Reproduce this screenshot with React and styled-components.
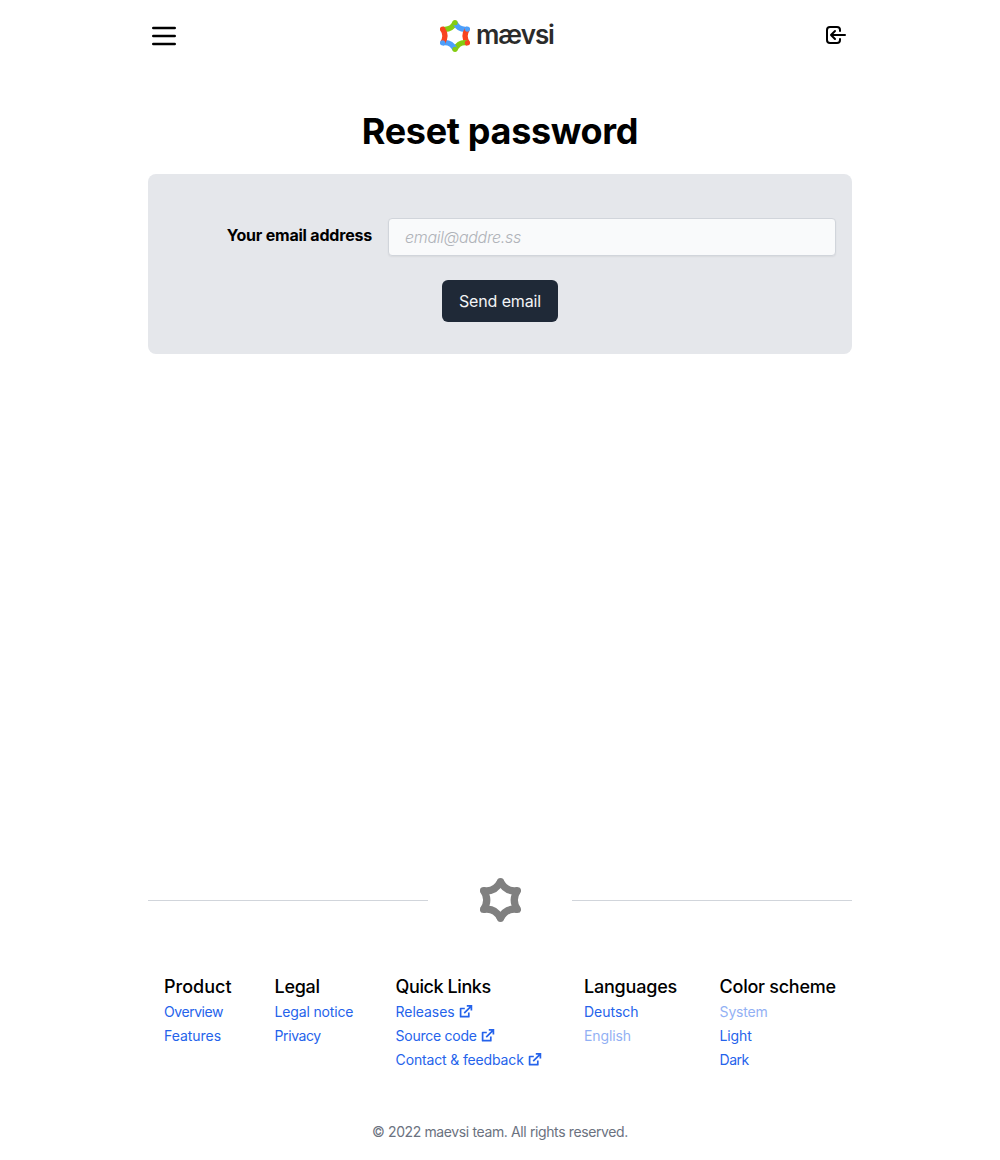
import React from 'react';
import styled, { createGlobalStyle } from 'styled-components';

const GlobalStyle = createGlobalStyle`
  *, *::before, *::after { box-sizing: border-box; }
  body {
    margin: 0;
    background: #fff;
    color: #000;
    font-family: Inter, "Open Sans", sans-serif;
    font-size: 16px;
    line-height: 24px;
  }
`;

const Page = styled.div`
  display: flex;
  flex-direction: column;
  width: 704px;
  height: 1160px;
  margin: 0 auto;
`;

const Header = styled.header`
  display: flex;
  align-items: flex-start;
  justify-content: space-between;
  height: 72px;
  padding-top: 20px;
`;

const IconButton = styled.button`
  display: flex;
  padding: ${p => p.$padding || '0'};
  border: 0;
  background: none;
  color: inherit;
`;

const Brand = styled.a`
  display: flex;
  color: #2b2b2b;
  margin-right: 10px;
`;

const Wordmark = styled.span`
  margin-left: 6px;
  padding-top: 1px;
  width: 78px;
  font-size: 26px;
  font-weight: 600;
  line-height: 28px;
  letter-spacing: -1.15px;
  white-space: nowrap;
`;

const Tracked = styled.span`
  letter-spacing: ${p => p.$tracking || 0}px;
  white-space: nowrap;
`;

const Title = styled.h1`
  margin: 39px 0 0;
  font-size: 36px;
  font-weight: 700;
  line-height: 40px;
  text-align: center;
`;

const Card = styled.form`
  display: flex;
  flex-direction: column;
  align-items: center;
  gap: 24px;
  height: 180px;
  margin-top: 23px;
  padding: 44px 16px 0;
  border-radius: 8px;
  background: #e5e7eb;
`;

const Field = styled.div`
  display: grid;
  grid-template-columns: 208px 448px;
  column-gap: 16px;
  width: 100%;
`;

const Label = styled.label`
  padding-top: 5px;
  font-weight: 700;
  text-align: right;
`;

const Input = styled.input`
  height: 38px;
  padding: 0 16px;
  border: 1px solid #d1d5db;
  border-radius: 4px;
  background: #f9fafb;
  box-shadow: 0 1px 2px rgba(0, 0, 0, 0.06);
  font: 400 16px/24px Inter, "Open Sans", sans-serif;
  &::placeholder {
    color: #b0b3b9;
    font-style: italic;
    font-weight: 300;
    letter-spacing: -0.3px;
    opacity: 1;
  }
`;

const Submit = styled.button`
  width: 116px;
  height: 42px;
  padding: 0;
  border: 0;
  border-radius: 6px;
  background: #1f2937;
  color: #f3f4f6;
  font: 400 16px/24px Inter, "Open Sans", sans-serif;
`;

const Footer = styled.footer`
  margin-top: auto;
  height: 284px;
`;

const Divider = styled.div`
  display: flex;
  align-items: center;
  justify-content: space-between;
  height: 48px;
`;

const Rule = styled.div`
  width: 280px;
  height: 1px;
  margin-top: 1px;
  background: #d1d5db;
`;

const Columns = styled.nav`
  display: grid;
  grid-template-columns: 110.6px 121px 188.4px 135.6px 116.4px;
  height: 100px;
  margin-top: 48px;
  padding: 0 16px;
`;

const Heading = styled.h2`
  height: 28px;
  margin: 0;
  font-size: 18px;
  font-weight: 500;
  line-height: 30px;
`;

const FooterLink = styled.a`
  display: flex;
  align-items: center;
  gap: 4px;
  height: 24px;
  color: #2563eb;
  opacity: ${p => (p.$muted ? 0.5 : 1)};
  font-size: 14px;
`;

const Copyright = styled.p`
  margin: 48px 0 0;
  color: #6b7280;
  font-size: 14px;
  text-align: center;
`;

const GREEN = '#84cc10';
const BLUE = '#4c9ffb';
const RED = '#f8441f';

// Each arm ends in a round cap that overlaps the start of the next one.
const arms = [
  { d: 'M5 12.5Q16.5 14.5 22 3.7', end: [22, 3.7], color: GREEN },
  { d: 'M22 3.7Q27.5 14.5 39 12.5', end: [39, 12.5], color: BLUE },
  { d: 'M39 12.5Q32.5 22 39 31.5', end: [39, 31.5], color: RED },
  { d: 'M39 31.5Q27.5 29.5 22 40.3', end: [22, 40.3], color: GREEN },
  { d: 'M22 40.3Q16.5 29.5 5 31.5', end: [5, 31.5], color: BLUE },
  { d: 'M5 31.5Q11.5 22 5 12.5', end: [5, 12.5], color: RED },
];

const Star = ({ width, height, mono }) => (
  <svg width={width} height={height} viewBox="1.5 0 41 44" preserveAspectRatio="none" fill="none">
    {arms.map(a => (
      <path key={a.d} d={a.d} stroke={mono || a.color} strokeWidth="7.2" />
    ))}
    {arms.map(a => (
      <circle key={a.d} cx={a.end[0]} cy={a.end[1]} r="3.6" fill={mono || a.color} />
    ))}
  </svg>
);

const MenuIcon = () => (
  <svg width="32" height="32" viewBox="0 0 24 24" fill="none" stroke="currentColor" strokeWidth="2" strokeLinecap="round">
    <path d="M4 6h16M4 12h16M4 18h16" />
  </svg>
);

const LoginIcon = () => (
  <svg width="24" height="24" viewBox="0 0 24 24" fill="none" stroke="currentColor" strokeWidth="2" strokeLinecap="round" strokeLinejoin="round">
    <path d="M11 16l-4-4m0 0l4-4m-4 4h14m-5 4v1a3 3 0 01-3 3H6a3 3 0 01-3-3V7a3 3 0 013-3h7a3 3 0 013 3v1" />
  </svg>
);

const ExternalIcon = () => (
  <svg width="14" height="14" viewBox="0.2 0.5 14 14" fill="none" stroke="currentColor" strokeWidth="1.7">
    <path d="M6 4H1.8v8.2H10V8" strokeLinejoin="round" />
    <path d="M8 1.4h4.6V6M12.2 1.8L5.4 8.6" />
  </svg>
);

const columns = [
  { title: 'Product', ls: 0, links: [['Overview', -0.44], ['Features', -0.03]] },
  { title: 'Legal', ls: -0.3, links: [['Legal notice', -0.17], ['Privacy', -0.42]] },
  {
    title: 'Quick Links',
    ls: -0.42,
    external: true,
    links: [['Releases', -0.06], ['Source code', -0.26], ['Contact & feedback', -0.15]],
  },
  { title: 'Languages', ls: -0.2, links: [['Deutsch', 0], ['English', -0.1, true]] },
  { title: 'Color scheme', ls: -0.26, links: [['System', -0.16, true], ['Light', -0.13], ['Dark', -0.5]] },
];

export default function App() {
  return (
    <>
      <GlobalStyle />
      <Page>
        <Header>
          <IconButton type="button" aria-label="Menu"><MenuIcon /></IconButton>
          <Brand>
            <Star width={30} height={32} />
            <Wordmark>mævsi</Wordmark>
          </Brand>
          <IconButton type="button" aria-label="Sign in" $padding="3px 4px 0 0"><LoginIcon /></IconButton>
        </Header>
        <Title><Tracked $tracking={-0.32}>Reset password</Tracked></Title>
        <Card>
          <Field>
            <Label htmlFor="email"><Tracked $tracking={-0.2}>Your email address</Tracked></Label>
            <Input id="email" type="email" placeholder="email@addre.ss" />
          </Field>
          <Submit type="button"><Tracked $tracking={-0.14}>Send email</Tracked></Submit>
        </Card>
        <Footer>
          <Divider>
            <Rule />
            <Star width={41} height={44} mono="#808080" />
            <Rule />
          </Divider>
          <Columns>
            {columns.map(c => (
              <div key={c.title}>
                <Heading><Tracked $tracking={c.ls}>{c.title}</Tracked></Heading>
                {c.links.map(([text, ls, muted]) => (
                  <FooterLink key={text} $muted={muted}>
                    <Tracked $tracking={ls}>{text}</Tracked>
                    {c.external && <ExternalIcon />}
                  </FooterLink>
                ))}
              </div>
            ))}
          </Columns>
          <Copyright><Tracked $tracking={-0.377}>© 2022 maevsi team. All rights reserved.</Tracked></Copyright>
        </Footer>
      </Page>
    </>
  );
}
